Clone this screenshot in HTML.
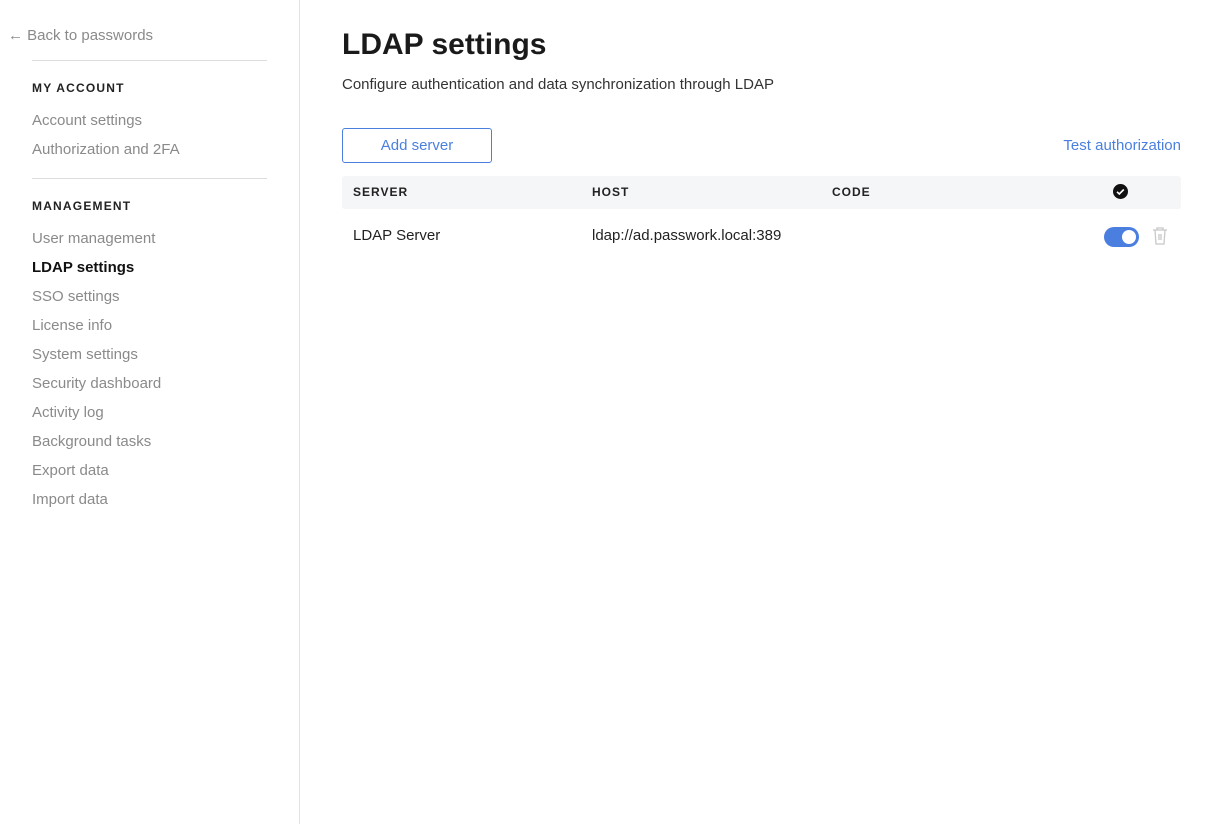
<!DOCTYPE html>
<html><head><style>
*{box-sizing:border-box;margin:0;padding:0}
body{width:1211px;height:824px;background:#fff;font-family:"Liberation Sans",sans-serif;position:relative;overflow:hidden;color:#222}
.side{position:absolute;left:0;top:0;width:300px;height:824px;border-right:1px solid #e3e3e3}
.t{position:absolute;white-space:nowrap}
.g{color:#8a8a8a;font-size:15px}
.h{font-size:12px;font-weight:bold;letter-spacing:1.2px;color:#222}
.line{position:absolute;left:32px;width:235px;height:1px;background:#ddd}
.th{font-size:12px;font-weight:bold;letter-spacing:1px;color:#222;top:185px}
</style></head><body>
<div class="side">
<div class="t g" style="left:8px;top:27px">←&nbsp;Back to passwords</div>
<div class="line" style="top:60px"></div>
<div class="t h" style="left:32px;top:81px">MY ACCOUNT</div>
<div class="t g" style="left:32px;top:112px">Account settings</div>
<div class="t g" style="left:32px;top:141px">Authorization and 2FA</div>
<div class="line" style="top:178px"></div>
<div class="t h" style="left:32px;top:199px">MANAGEMENT</div>
<div class="t g" style="left:32px;top:230px">User management</div>
<div class="t" style="left:32px;top:259px;font-size:15px;font-weight:bold;color:#111">LDAP settings</div>
<div class="t g" style="left:32px;top:288px">SSO settings</div>
<div class="t g" style="left:32px;top:317px">License info</div>
<div class="t g" style="left:32px;top:346px">System settings</div>
<div class="t g" style="left:32px;top:375px">Security dashboard</div>
<div class="t g" style="left:32px;top:404px">Activity log</div>
<div class="t g" style="left:32px;top:433px">Background tasks</div>
<div class="t g" style="left:32px;top:462px">Export data</div>
<div class="t g" style="left:32px;top:491px">Import data</div>
</div>
<div class="t" style="left:342px;top:28px;font-size:30px;font-weight:bold;color:#1a1a1a">LDAP settings</div>
<div class="t" style="left:342px;top:76px;font-size:15px;color:#333">Configure authentication and data synchronization through LDAP</div>
<div class="t" style="left:342px;top:128px;width:150px;height:35px;border:1px solid #4a7fe0;border-radius:3px;color:#4a7fe0;font-size:15px;text-align:center;line-height:33px">Add server</div>
<div class="t" style="right:30px;top:137px;color:#4a7fe0;font-size:15px">Test authorization</div>
<div class="t" style="left:342px;top:176px;width:839px;height:33px;background:#f5f6f8;border-radius:3px"></div>
<div class="t th" style="left:353px">SERVER</div>
<div class="t th" style="left:592px">HOST</div>
<div class="t th" style="left:832px">CODE</div>
<div class="t" style="left:1113px;top:184px;width:15px;height:15px;border-radius:50%;background:#111"><svg width="15" height="15"><path d="M4 7.8l2.3 2.2 4.5-4.5" stroke="#fff" stroke-width="1.6" fill="none"/></svg></div>
<div class="t" style="left:353px;top:227px;font-size:15px;color:#222">LDAP Server</div>
<div class="t" style="left:592px;top:227px;font-size:15px;color:#222">ldap://ad.passwork.local:389</div>
<div class="t" style="left:1104px;top:227px;width:35px;height:20px;border-radius:10px;background:#4a7fe0"><div style="position:absolute;right:3px;top:3px;width:14px;height:14px;border-radius:50%;background:#fff"></div></div>
<svg class="t" style="left:1151px;top:226px" width="18" height="20" viewBox="0 0 18 20"><path d="M2 4h14M6 4V2h6v2M4 4l1 14h8l1-14M8 8v6M10 8v6" stroke="#c8c8c8" stroke-width="1.3" fill="none"/></svg>
</body></html>
